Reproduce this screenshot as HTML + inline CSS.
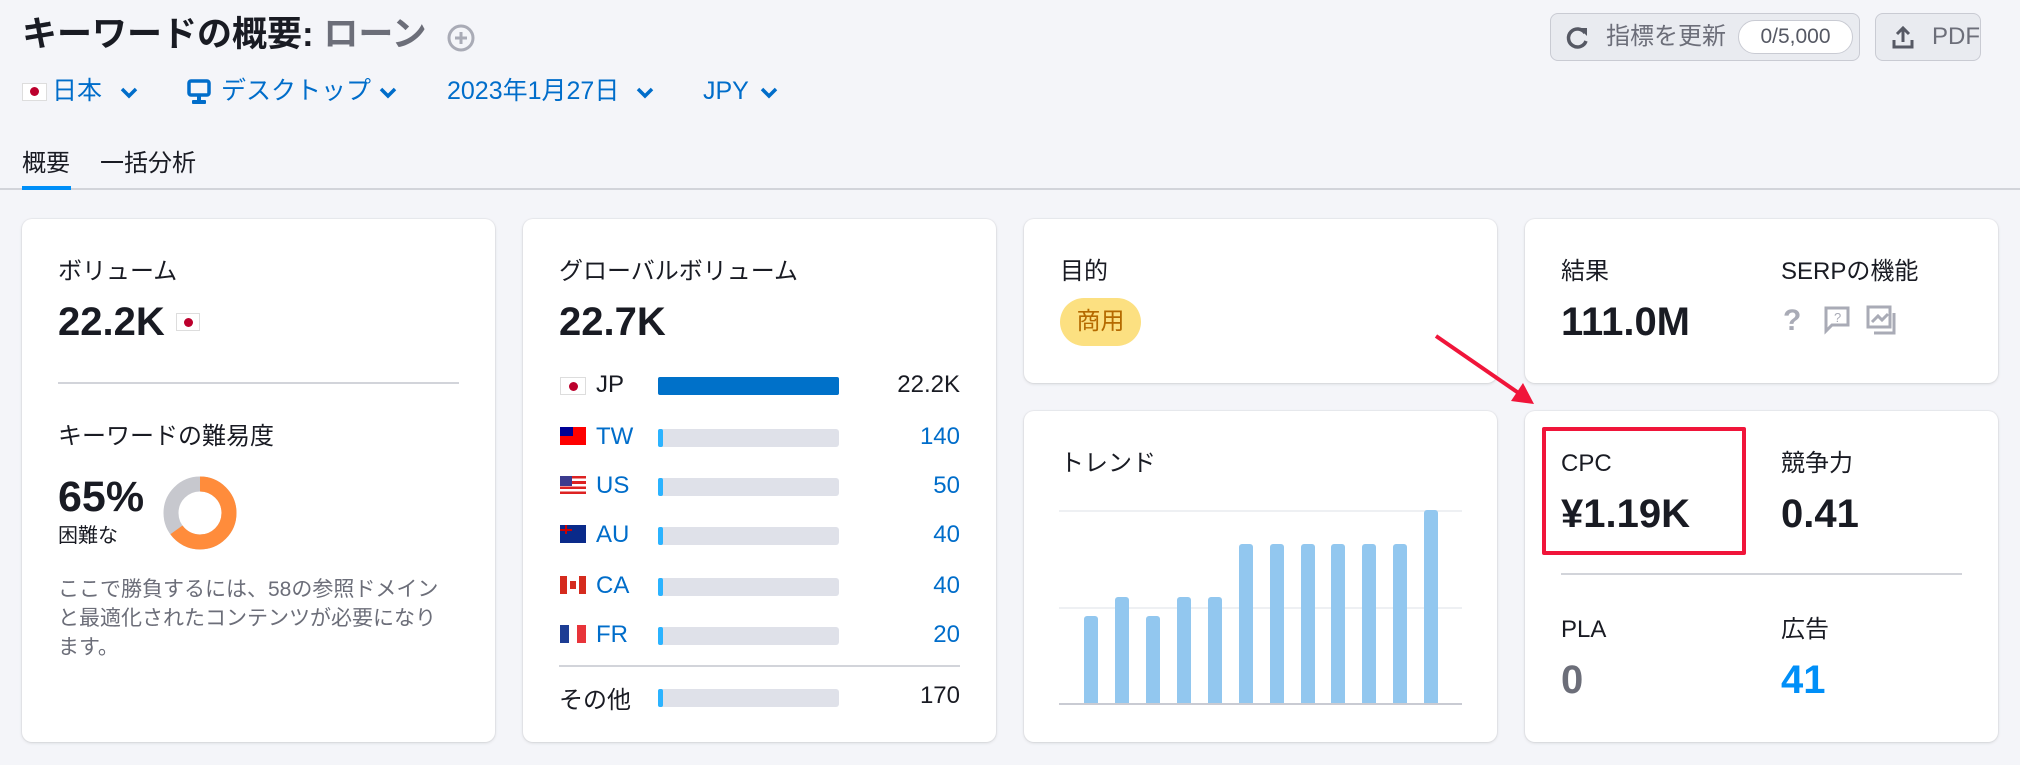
<!DOCTYPE html>
<html><head><meta charset="utf-8"><style>
*{box-sizing:border-box;margin:0;padding:0}
body{width:2020px;height:765px;background:#f4f5f9;font-family:"Liberation Sans","Noto Sans CJK JP",sans-serif;color:#191b23;position:relative;overflow:hidden}
.a{position:absolute;white-space:nowrap}
.card{position:absolute;background:#fff;border-radius:10px;box-shadow:0 1px 3px rgba(0,0,0,.12),0 0 0 1px rgba(0,0,0,.03)}
.lbl{font-size:24px;line-height:28px}
.val{font-size:40px;font-weight:bold;line-height:46px}
.blue{color:#006dca}
.bar{position:absolute;left:658px;width:181px;height:18px;background:#dfe1e9;border-radius:3px}
.bar i{position:absolute;left:0;top:0;bottom:0;width:5px;background:#2bb3ff;border-radius:2px}
.cb{position:absolute;width:14px;background:#92c7ef;border-radius:3px 3px 0 0;bottom:39px}
</style></head><body>
<div class="a" style="left:22px;top:15px;font-size:35px;font-weight:bold;line-height:40px">キーワードの概要: <span style="color:#6c6e79">ローン</span></div>
<svg class="a" style="left:446px;top:23px" width="30" height="30" viewBox="0 0 30 30"><circle cx="15" cy="15" r="12" fill="none" stroke="#a9abb6" stroke-width="3"/><path d="M15 9v12M9 15h12" stroke="#a9abb6" stroke-width="3"/></svg>

<div class="a" style="left:22px;top:83px;width:25px;height:18px;background:#fff;border:1px solid #ddd"><span style="position:absolute;left:7px;top:3px;width:9px;height:9px;border-radius:50%;background:#bc002d"></span></div>
<div class="a blue" style="left:52px;top:76px;font-size:25px;line-height:30px">日本</div>
<svg class="a" style="left:120px;top:87px" width="18" height="12" viewBox="0 0 18 12"><path d="M2 2l7 7 7-7" fill="none" stroke="#006dca" stroke-width="3.5"/></svg>

<svg class="a" style="left:187px;top:78px" width="24" height="28" viewBox="0 0 24 28"><rect x="2" y="3" width="20" height="14" rx="2" fill="none" stroke="#006dca" stroke-width="3.5"/><rect x="10" y="18" width="4" height="4" fill="#006dca"/><rect x="5" y="22" width="14" height="4" rx="1" fill="#006dca"/></svg>
<div class="a blue" style="left:221px;top:76px;font-size:25px;line-height:30px">デスクトップ</div>
<svg class="a" style="left:379px;top:87px" width="18" height="12" viewBox="0 0 18 12"><path d="M2 2l7 7 7-7" fill="none" stroke="#006dca" stroke-width="3.5"/></svg>

<div class="a blue" style="left:447px;top:76px;font-size:25px;line-height:30px">2023年1月27日</div>
<svg class="a" style="left:636px;top:87px" width="18" height="12" viewBox="0 0 18 12"><path d="M2 2l7 7 7-7" fill="none" stroke="#006dca" stroke-width="3.5"/></svg>

<div class="a blue" style="left:703px;top:76px;font-size:25px;line-height:30px">JPY</div>
<svg class="a" style="left:760px;top:87px" width="18" height="12" viewBox="0 0 18 12"><path d="M2 2l7 7 7-7" fill="none" stroke="#006dca" stroke-width="3.5"/></svg>

<div class="a" style="left:1550px;top:13px;width:310px;height:48px;border:1px solid #c9cbd3;border-radius:8px;background:#e9ebf0"></div>
<svg class="a" style="left:1565px;top:25px" width="26" height="26" viewBox="0 0 26 26"><path d="M20 8A9 9 0 1 0 21 16" fill="none" stroke="#565964" stroke-width="3.5"/><path d="M14 3h8v8z" fill="#565964"/></svg>
<div class="a" style="left:1606px;top:22px;font-size:24px;color:#6c6e79;line-height:30px">指標を更新</div>
<div class="a" style="left:1738px;top:20px;width:115px;height:34px;border:1px solid #c9cbd3;border-radius:17px;background:#fff;font-size:21px;color:#565964;text-align:center;line-height:32px">0/5,000</div>
<div class="a" style="left:1875px;top:13px;width:106px;height:48px;border:1px solid #c9cbd3;border-radius:8px;background:#e9ebf0"></div>
<svg class="a" style="left:1891px;top:24px" width="24" height="26" viewBox="0 0 24 26"><path d="M12 18V4M6 10l6-6 6 6" fill="none" stroke="#565964" stroke-width="3"/><path d="M3 16v7h18v-7" fill="none" stroke="#565964" stroke-width="3"/></svg>
<div class="a" style="left:1932px;top:22px;font-size:24px;color:#6c6e79;line-height:30px">PDF</div>

<div class="a" style="left:22px;top:149px;font-size:24px;line-height:30px">概要</div>
<div class="a" style="left:100px;top:149px;font-size:24px;line-height:30px">一括分析</div>
<div class="a" style="left:0;top:188px;width:2020px;height:2px;background:#d2d4da"></div>
<div class="a" style="left:22px;top:186px;width:49px;height:4px;background:#008ff8"></div>

<div class="card" style="left:22px;top:219px;width:473px;height:523px">
<div class="a lbl" style="left:36px;top:39px">ボリューム</div>
<div class="a val" style="left:36px;top:80px">22.2K <span style="display:inline-block;width:24px;height:18px;border:1px solid #ddd;position:relative;vertical-align:4px"><span style="position:absolute;left:7px;top:4px;width:9px;height:9px;border-radius:50%;background:#bc002d"></span></span></div>
<div class="a" style="left:36px;top:163px;width:401px;height:2px;background:#d2d4da"></div>
<div class="a lbl" style="left:36px;top:204px">キーワードの難易度</div>
<div class="a" style="left:36px;top:254px;font-size:43px;font-weight:bold;line-height:48px">65%</div>
<div class="a" style="left:36px;top:305px;font-size:20px;line-height:24px">困難な</div>
<svg class="a" style="left:140px;top:256px" width="76" height="76" viewBox="0 0 76 76"><circle cx="38" cy="38" r="29" fill="none" stroke="#c7c8ce" stroke-width="15"/><circle cx="38" cy="38" r="29" fill="none" stroke="#ff8c3b" stroke-width="15" stroke-dasharray="118.4 182.2" transform="rotate(-90 38 38)"/></svg>
<div class="a" style="left:36px;top:356px;font-size:21px;line-height:29px;color:#6c6e79;white-space:normal;width:395px">ここで勝負するには、58の参照ドメインと最適化されたコンテンツが必要になります。</div>
</div>

<div class="card" style="left:523px;top:219px;width:473px;height:523px">
<div class="a lbl" style="left:36px;top:39px">グローバルボリューム</div>
<div class="a val" style="left:36px;top:80px">22.7K</div>
</div>
<div class="a" style="left:560px;top:377px;width:26px;height:18px;border:1px solid #ddd;background:#fff"><span style="position:absolute;left:8px;top:4px;width:9px;height:9px;border-radius:50%;background:#bc002d"></span></div>
<div class="a" style="left:596px;top:371px;font-size:24px">JP</div>
<div class="a" style="left:658px;top:377px;width:181px;height:18px;background:#0071c9;border-radius:2px"></div>
<div class="a" style="left:860px;top:371px;width:100px;text-align:right;font-size:24px">22.2K</div>

<div class="a" style="left:560px;top:427px;width:26px;height:18px;background:#fe0000"><span style="position:absolute;left:0;top:0;width:13px;height:9px;background:#000095"></span></div>
<div class="a blue" style="left:596px;top:423px;font-size:24px">TW</div>
<div class="bar" style="top:429px"><i></i></div>
<div class="a blue" style="left:860px;top:423px;width:100px;text-align:right;font-size:24px">140</div>

<div class="a" style="left:560px;top:476px;width:26px;height:18px;background:repeating-linear-gradient(#d22 0 2.6px,#fff 2.6px 5.2px)"><span style="position:absolute;left:0;top:0;width:12px;height:10px;background:#3c3b8e"></span></div>
<div class="a blue" style="left:596px;top:472px;font-size:24px">US</div>
<div class="bar" style="top:478px"><i></i></div>
<div class="a blue" style="left:860px;top:472px;width:100px;text-align:right;font-size:24px">50</div>

<div class="a" style="left:560px;top:525px;width:26px;height:18px;background:#0a2a8a"><span style="position:absolute;left:0;top:0;width:12px;height:9px;background:linear-gradient(#c00,#c00) 5px 0/2px 9px no-repeat,linear-gradient(#c00,#c00) 0 4px/12px 2px no-repeat,#0a2a8a"></span></div>
<div class="a blue" style="left:596px;top:521px;font-size:24px">AU</div>
<div class="bar" style="top:527px"><i></i></div>
<div class="a blue" style="left:860px;top:521px;width:100px;text-align:right;font-size:24px">40</div>

<div class="a" style="left:560px;top:576px;width:26px;height:18px;background:linear-gradient(90deg,#d52b1e 0 7px,#fff 7px 19px,#d52b1e 19px)"><span style="position:absolute;left:10px;top:5px;width:6px;height:8px;background:#d52b1e"></span></div>
<div class="a blue" style="left:596px;top:572px;font-size:24px">CA</div>
<div class="bar" style="top:578px"><i></i></div>
<div class="a blue" style="left:860px;top:572px;width:100px;text-align:right;font-size:24px">40</div>

<div class="a" style="left:560px;top:625px;width:26px;height:18px;background:linear-gradient(90deg,#1d3d94 0 9px,#fff 9px 17px,#e8343a 17px)"></div>
<div class="a blue" style="left:596px;top:621px;font-size:24px">FR</div>
<div class="bar" style="top:627px"><i></i></div>
<div class="a blue" style="left:860px;top:621px;width:100px;text-align:right;font-size:24px">20</div>

<div class="a" style="left:559px;top:665px;width:401px;height:2px;background:#d2d4da"></div>
<div class="a" style="left:559px;top:680px;font-size:24px">その他</div>
<div class="bar" style="top:689px"><i></i></div>
<div class="a" style="left:860px;top:682px;width:100px;text-align:right;font-size:24px">170</div>

<div class="card" style="left:1024px;top:219px;width:473px;height:164px">
<div class="a lbl" style="left:36px;top:39px">目的</div>
<div class="a" style="left:36px;top:79px;width:81px;height:48px;border-radius:24px;background:#fce081;color:#b56a00;font-size:24px;line-height:48px;text-align:center">商用</div>
</div>
<div class="card" style="left:1024px;top:411px;width:473px;height:331px">
<div class="a lbl" style="left:36px;top:39px">トレンド</div>
<div class="a" style="left:35px;top:99px;width:403px;height:2px;background:#eef0f3"></div>
<div class="a" style="left:35px;top:196px;width:403px;height:2px;background:#eef0f3"></div>
<div class="a" style="left:35px;top:292px;width:403px;height:2px;background:#c9cbd3"></div>
<div class="cb" style="left:60px;height:87px"></div>
<div class="cb" style="left:91px;height:106px"></div>
<div class="cb" style="left:122px;height:87px"></div>
<div class="cb" style="left:153px;height:106px"></div>
<div class="cb" style="left:184px;height:106px"></div>
<div class="cb" style="left:215px;height:159px"></div>
<div class="cb" style="left:246px;height:159px"></div>
<div class="cb" style="left:277px;height:159px"></div>
<div class="cb" style="left:307px;height:159px"></div>
<div class="cb" style="left:338px;height:159px"></div>
<div class="cb" style="left:369px;height:159px"></div>
<div class="cb" style="left:400px;height:193px"></div>
</div>

<div class="card" style="left:1525px;top:219px;width:473px;height:164px">
<div class="a lbl" style="left:36px;top:39px">結果</div>
<div class="a val" style="left:36px;top:80px">111.0M</div>
<div class="a lbl" style="left:256px;top:39px">SERPの機能</div>
<div class="a" style="left:258px;top:85px;font-size:30px;color:#a9abb6;font-weight:bold">?</div>
<svg class="a" style="left:298px;top:86px" width="28" height="30" viewBox="0 0 28 30"><path d="M3 3h22v17H9l-6 6z" fill="none" stroke="#a9abb6" stroke-width="3"/><text x="11" y="17" font-size="13" fill="#a9abb6" font-family="Liberation Sans">?</text></svg>
<svg class="a" style="left:341px;top:86px" width="30" height="30" viewBox="0 0 30 30"><rect x="2" y="2" width="22" height="20" fill="none" stroke="#a9abb6" stroke-width="3"/><path d="M6 17l6-6 4 4 6-6M28 8v20H8" fill="none" stroke="#a9abb6" stroke-width="3"/></svg>
</div>
<div class="card" style="left:1525px;top:411px;width:473px;height:331px">
<div class="a lbl" style="left:36px;top:39px">CPC</div>
<div class="a val" style="left:36px;top:80px">¥1.19K</div>
<div class="a lbl" style="left:256px;top:39px">競争力</div>
<div class="a val" style="left:256px;top:80px">0.41</div>
<div class="a" style="left:36px;top:162px;width:401px;height:2px;background:#d2d4da"></div>
<div class="a lbl" style="left:36px;top:205px">PLA</div>
<div class="a val" style="left:36px;top:246px;color:#6c6e79">0</div>
<div class="a lbl" style="left:256px;top:205px">広告</div>
<div class="a val" style="left:256px;top:246px;color:#008ff8">41</div>
</div>
<div class="a" style="left:1542px;top:427px;width:204px;height:128px;border:4px solid #f0153a;border-radius:2px"></div>
<svg class="a" style="left:1420px;top:325px" width="130" height="90" viewBox="0 0 130 90"><path d="M16 11L100 69" stroke="#f0153a" stroke-width="4"/><path d="M114 79L91 76L103 58z" fill="#f0153a"/></svg>
</body></html>
